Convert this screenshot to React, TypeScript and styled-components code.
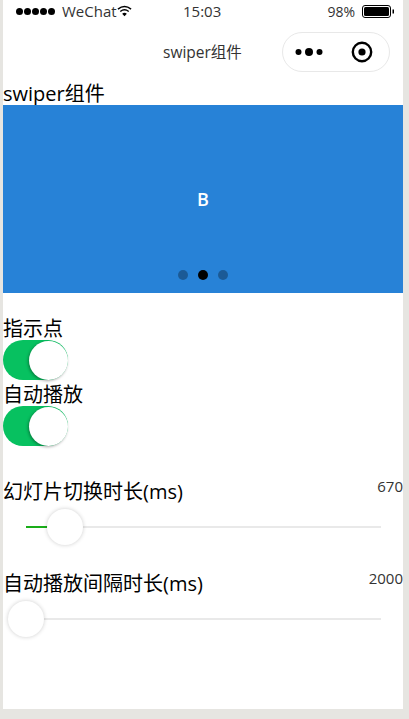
import React from "react";
import styled, { createGlobalStyle } from "styled-components";

const GlobalStyle = createGlobalStyle`
  html, body {
    margin: 0;
    padding: 0;
    height: 100%;
    background: #e6e5e1;
  }
  body {
    font-family: "Open Sans", "Noto Sans CJK SC", sans-serif;
    overflow: hidden;
  }
`;

const Phone = styled.div`
  width: 400px;
  height: 709px;
  margin-left: 3px;
  background: #fff;
  color: #000;
  display: flex;
  flex-direction: column;
`;

const StatusBar = styled.div`
  height: 24px;
  position: relative;
  display: flex;
  align-items: center;
  padding: 0 8px 2px 12px;
  box-sizing: border-box;
  font-size: 15px;
  color: #333;
`;

const Signal = styled.div`
  display: flex;
  gap: 1px;
  margin-left: 1px;
`;

const SignalDot = styled.span`
  width: 7px;
  height: 7px;
  border-radius: 50%;
  background: #000;
`;

const Carrier = styled.span`
  margin-left: 7px;
`;

const Clock = styled.span`
  position: absolute;
  left: 180px;
  top: 1px;
  line-height: 20px;
  font-size: 15px;
`;

const BatteryArea = styled.div`
  margin-left: auto;
  display: flex;
  align-items: center;
  gap: 7px;
  font-size: 14px;
`;

const NavBar = styled.div`
  height: 55px;
  display: flex;
  align-items: center;
  justify-content: flex-end;
  position: relative;
  padding-right: 13px;
  box-sizing: border-box;
`;

const NavTitle = styled.div`
  position: absolute;
  left: 160px;
  top: 18px;
  line-height: 20px;
  font-size: 15.5px;
  color: #333;
`;

const Capsule = styled.div`
  width: 108px;
  height: 40px;
  box-sizing: border-box;
  border: 1px solid #e8e8e8;
  border-radius: 20px;
  display: flex;
  align-items: center;
  justify-content: space-between;
  padding: 0 16px 0 12px;
`;

const Label = styled.div`
  font-size: 20px;
  line-height: 30px;
  height: 26px;
  white-space: nowrap;
`;

const Swiper = styled.div`
  height: 188px;
  background: #2782d7;
  position: relative;
  display: flex;
  align-items: center;
  justify-content: center;
  margin-bottom: 21px;
`;

const SlideText = styled.div`
  color: #fff;
  font-size: 18px;
  font-weight: 600;
`;

const Dots = styled.div`
  position: absolute;
  bottom: 13px;
  left: 175px;
  display: flex;
  gap: 10px;
`;

const Dot = styled.span<{ $active?: boolean }>`
  width: 10px;
  height: 10px;
  border-radius: 50%;
  background: ${({ $active }) => ($active ? "#000" : "rgba(0, 0, 0, 0.3)")};
`;

const Switch = styled.div`
  width: 65px;
  height: 40px;
  box-sizing: border-box;
  border-radius: 20px;
  background: #07c160;
  position: relative;
`;

const SwitchKnob = styled.div`
  position: absolute;
  top: 0.5px;
  right: 0.5px;
  width: 39px;
  height: 39px;
  border-radius: 50%;
  background: #fff;
  box-shadow: -1px 1px 3px rgba(0, 0, 0, 0.35);
`;

const SliderBlock = styled.div<{ $top: number }>`
  margin-top: ${({ $top }) => $top}px;
  height: 67px;
`;

const SliderHead = styled.div`
  display: flex;
  justify-content: space-between;
`;

const SliderValue = styled.div`
  font-size: 15px;
  line-height: 18px;
  color: #333;
`;

const Track = styled.div`
  position: relative;
  width: 355px;
  height: 2px;
  margin: 23px 0 0 23px;
  background: #e9e9e9;
`;

const TrackFill = styled.div`
  position: absolute;
  left: 0;
  top: 0;
  height: 100%;
  background: #1aad19;
`;

const Thumb = styled.div`
  position: absolute;
  top: -17px;
  width: 36px;
  height: 36px;
  margin-left: -18px;
  border-radius: 50%;
  background: #fff;
  box-shadow: 0 0 4px rgba(0, 0, 0, 0.2);
`;

const WifiIcon = () => (
  <svg width="15" height="12" viewBox="0 0 16 12">
    <path d="M1 4 Q8 -1.5 15 4" fill="none" stroke="#000" strokeWidth="1.6" />
    <path d="M3.5 6.5 Q8 3 12.5 6.5" fill="none" stroke="#000" strokeWidth="1.6" />
    <path d="M5.5 8.8 Q8 7 10.5 8.8 L8 11.5 Z" fill="#000" />
  </svg>
);

const BatteryIcon = () => (
  <svg width="33" height="13" viewBox="0 0 33 13">
    <rect x="0.5" y="0.5" width="28" height="12" rx="2.5" fill="#fff" stroke="#000" />
    <rect x="2" y="2" width="25" height="9" rx="1.5" fill="#000" />
    <rect x="30.5" y="4.5" width="1.5" height="4" fill="#000" />
  </svg>
);

const MoreIcon = () => (
  <svg width="28" height="10" viewBox="0 0 28 10">
    <circle cx="3.5" cy="5" r="3" fill="#000" />
    <circle cx="14" cy="5" r="4" fill="#000" />
    <circle cx="24.5" cy="5" r="3" fill="#000" />
  </svg>
);

const CloseIcon = () => (
  <svg width="22" height="22" viewBox="0 0 22 22">
    <circle cx="11" cy="11" r="9.2" fill="none" stroke="#000" strokeWidth="2.4" />
    <circle cx="11" cy="11" r="3.6" fill="#000" />
  </svg>
);

type SliderProps = {
  title: string;
  value: number;
  position: number;
  top: number;
};

const SliderRow = ({ title, value, position, top }: SliderProps) => (
  <SliderBlock $top={top}>
    <SliderHead>
      <Label>{title}</Label>
      <SliderValue>{value}</SliderValue>
    </SliderHead>
    <Track>
      <TrackFill style={{ width: position }} />
      <Thumb style={{ left: position }} />
    </Track>
  </SliderBlock>
);

const App = () => (
  <Phone>
    <GlobalStyle />
    <StatusBar>
      <Signal>
        {[0, 1, 2, 3, 4].map((i) => (
          <SignalDot key={i} />
        ))}
      </Signal>
      <Carrier>WeChat</Carrier>
      <WifiIcon />
      <Clock>15:03</Clock>
      <BatteryArea>
        98%
        <BatteryIcon />
      </BatteryArea>
    </StatusBar>
    <NavBar>
      <NavTitle>swiper组件</NavTitle>
      <Capsule>
        <MoreIcon />
        <CloseIcon />
      </Capsule>
    </NavBar>
    <Label>swiper组件</Label>
    <Swiper>
      <SlideText>B</SlideText>
      <Dots>
        <Dot />
        <Dot $active />
        <Dot />
      </Dots>
    </Swiper>
    <Label>指示点</Label>
    <Switch>
      <SwitchKnob />
    </Switch>
    <Label>自动播放</Label>
    <Switch>
      <SwitchKnob />
    </Switch>
    <SliderRow title="幻灯片切换时长(ms)" value={670} position={39} top={31} />
    <SliderRow title="自动播放间隔时长(ms)" value={2000} position={0} top={25} />
  </Phone>
);

export default App;
